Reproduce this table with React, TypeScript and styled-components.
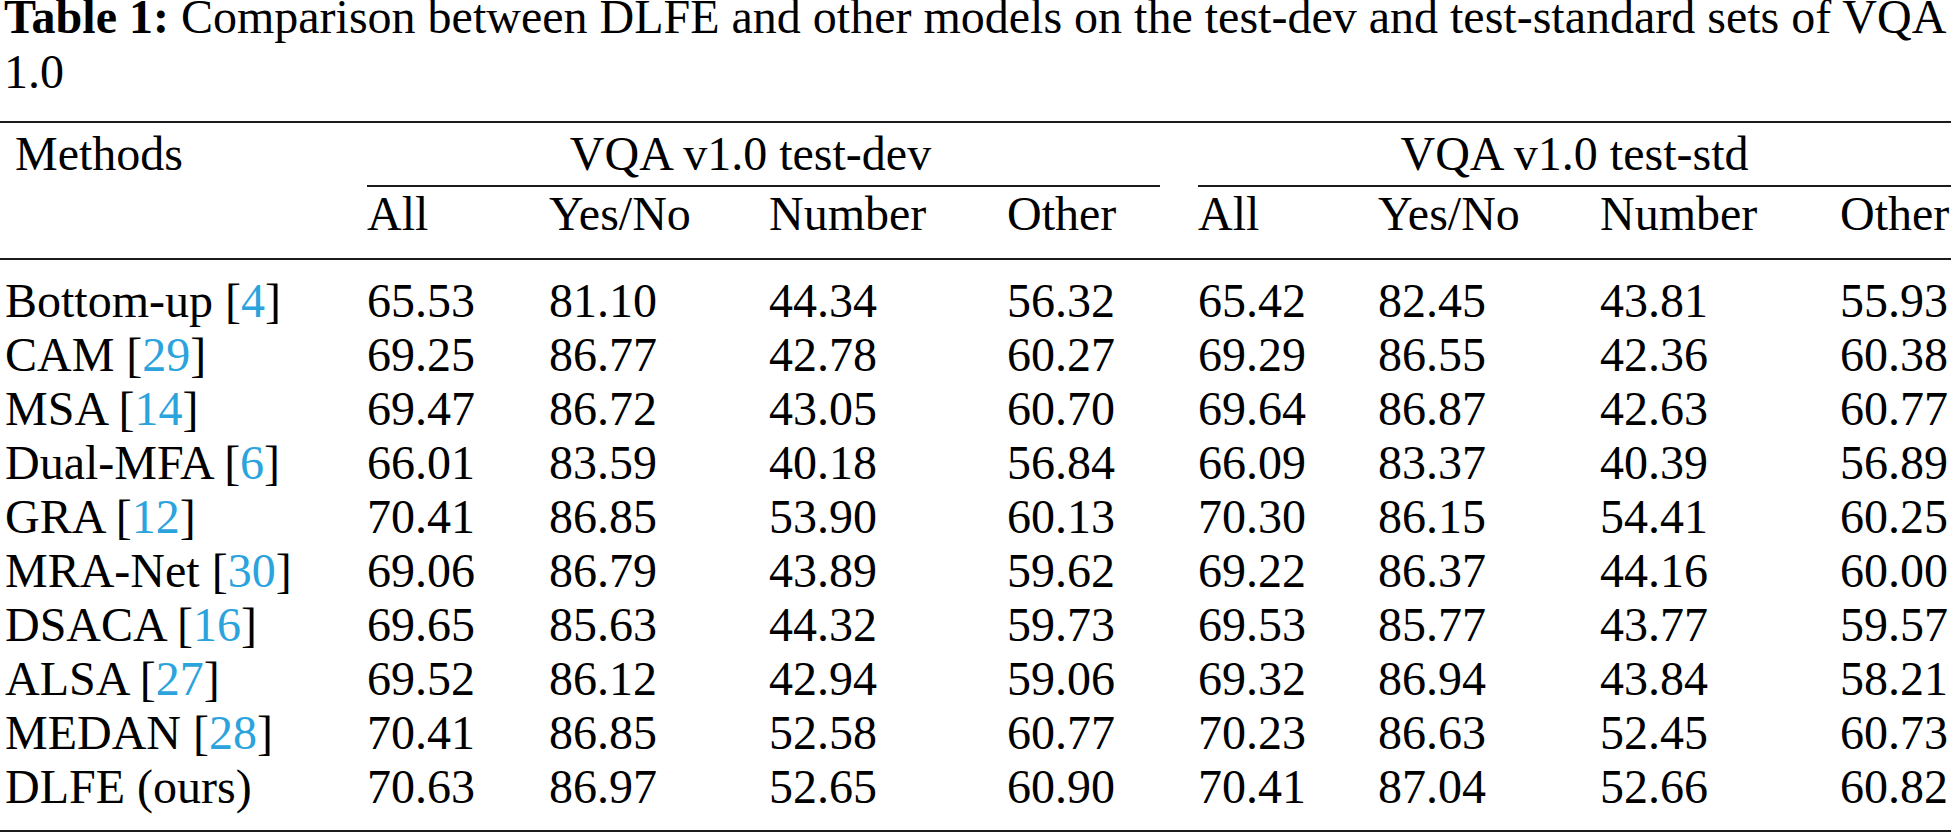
import React from 'react'
import styled, { createGlobalStyle } from 'styled-components'

const GlobalStyle = createGlobalStyle`
    html, body {
        margin: 0;
        padding: 0;
        background: #ffffff;
    }
    body {
        font-family: 'Liberation Serif', 'Times New Roman', serif;
        color: #000;
        width: 1955px;
        height: 836px;
        overflow: hidden;
    }
`

const COLS = '362px 182px 220px 238px 191px 180px 222px 240px 1fr'

const Page = styled.div`
    padding: 0 4px 0 0;
    font-size: 48px;
`

const Caption = styled.div`
    margin-top: -11px;
    padding-left: 4px;
    line-height: 55px;
    white-space: nowrap;

    b {
        font-weight: 700;
    }
`

const Table = styled.div`
    margin-top: 22px;
    border-top: 2px solid #1c1c1c;
    border-bottom: 2px solid #1c1c1c;
`

const Row = styled.div`
    display: grid;
    grid-template-columns: ${COLS};
    padding-left: 5px;
    white-space: nowrap;
`

const GroupRow = styled(Row)`
    height: 64px;
    line-height: 62px;
`

const SubRow = styled(Row)`
    line-height: 53px;
    padding-bottom: 18px;
    border-bottom: 2px solid #1c1c1c;
`

const Body = styled.div`
    padding: 14px 0 16px;
`

const DataRow = styled(Row)`
    height: 54px;
    line-height: 54px;
`

const Cell = styled.div<{ $indent?: number }>`
    padding-left: ${({ $indent }) => $indent || 0}px;
`

const Group = styled.div<{ $span: string; $trim?: number; $shift?: number }>`
    grid-column: ${({ $span }) => $span};
    text-align: center;
    height: 62px;
    margin-right: ${({ $trim }) => $trim || 0}px;
    padding-right: ${({ $shift }) => $shift || 0}px;
    border-bottom: 2px solid #1c1c1c;
`

const Ref = styled.span`
    color: #2ba3dc;
`

type Entry = { name: string; ref?: number; dev: string[]; std: string[] }

const rows: Entry[] = [
    { name: 'Bottom-up', ref: 4, dev: ['65.53', '81.10', '44.34', '56.32'], std: ['65.42', '82.45', '43.81', '55.93'] },
    { name: 'CAM', ref: 29, dev: ['69.25', '86.77', '42.78', '60.27'], std: ['69.29', '86.55', '42.36', '60.38'] },
    { name: 'MSA', ref: 14, dev: ['69.47', '86.72', '43.05', '60.70'], std: ['69.64', '86.87', '42.63', '60.77'] },
    { name: 'Dual-MFA', ref: 6, dev: ['66.01', '83.59', '40.18', '56.84'], std: ['66.09', '83.37', '40.39', '56.89'] },
    { name: 'GRA', ref: 12, dev: ['70.41', '86.85', '53.90', '60.13'], std: ['70.30', '86.15', '54.41', '60.25'] },
    { name: 'MRA-Net', ref: 30, dev: ['69.06', '86.79', '43.89', '59.62'], std: ['69.22', '86.37', '44.16', '60.00'] },
    { name: 'DSACA', ref: 16, dev: ['69.65', '85.63', '44.32', '59.73'], std: ['69.53', '85.77', '43.77', '59.57'] },
    { name: 'ALSA', ref: 27, dev: ['69.52', '86.12', '42.94', '59.06'], std: ['69.32', '86.94', '43.84', '58.21'] },
    { name: 'MEDAN', ref: 28, dev: ['70.41', '86.85', '52.58', '60.77'], std: ['70.23', '86.63', '52.45', '60.73'] },
    { name: 'DLFE (ours)', dev: ['70.63', '86.97', '52.65', '60.90'], std: ['70.41', '87.04', '52.66', '60.82'] },
]

const metrics = ['All', 'Yes/No', 'Number', 'Other']

export default function App() {
    return (
        <Page>
            <GlobalStyle />
            <Caption>
                <b>Table 1:</b> Comparison between DLFE and other models on the test-dev and test-standard sets of VQA
                <br />
                1.0
            </Caption>
            <Table>
                <GroupRow>
                    <Cell $indent={10}>Methods</Cell>
                    <Group $span="2 / 6" $trim={38} $shift={26}>VQA v1.0 test-dev</Group>
                    <Group $span="6 / 10">VQA v1.0 test-std</Group>
                </GroupRow>
                <SubRow>
                    <Cell />
                    {metrics.map((m) => <Cell key={'d' + m}>{m}</Cell>)}
                    {metrics.map((m) => <Cell key={'s' + m}>{m}</Cell>)}
                </SubRow>
                <Body>
                    {rows.map((r) => (
                        <DataRow key={r.name}>
                            <Cell>
                                {r.name}
                                {r.ref !== undefined && (
                                    <> [<Ref>{r.ref}</Ref>]</>
                                )}
                            </Cell>
                            {r.dev.map((v, i) => <Cell key={'d' + i}>{v}</Cell>)}
                            {r.std.map((v, i) => <Cell key={'s' + i}>{v}</Cell>)}
                        </DataRow>
                    ))}
                </Body>
            </Table>
        </Page>
    )
}
